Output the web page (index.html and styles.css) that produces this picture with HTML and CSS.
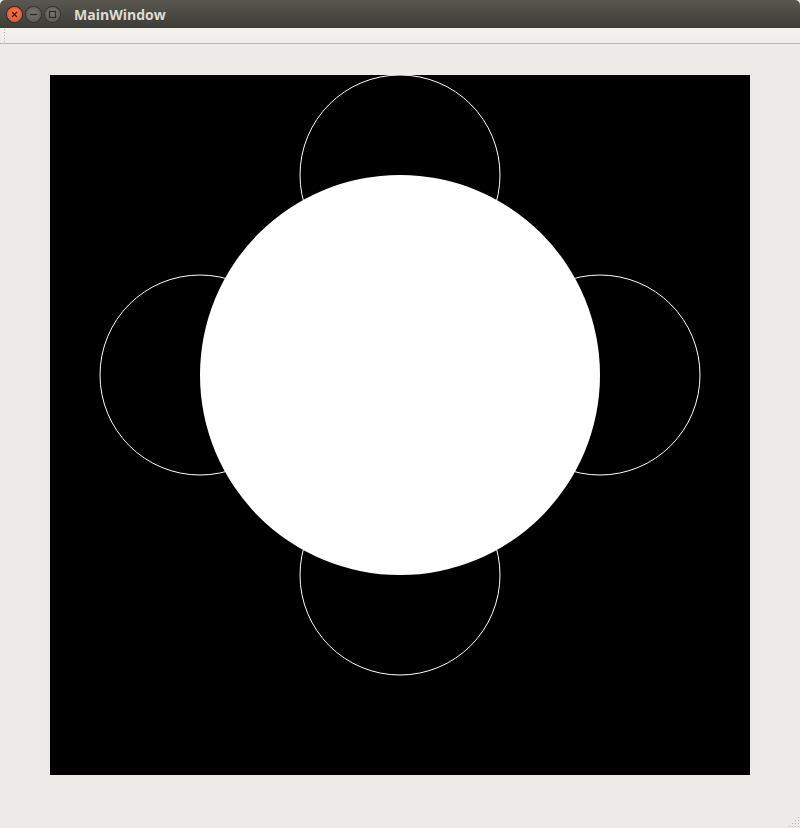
FILE: index.html
```html
<!DOCTYPE html>
<html>
<head>
<meta charset="utf-8">
<link rel="stylesheet" href="styles.css">
</head>
<body>
<div class="window">
  <div class="titlebar">
    <div class="controls">
      <span class="btn close">
        <svg width="15" height="15" viewBox="0 0 15 15"><path d="M5 5 L10 10 M10 5 L5 10" stroke="#3a1a10" stroke-width="1.2"/></svg>
      </span>
      <span class="btn">
        <svg width="15" height="15" viewBox="0 0 15 15"><path d="M4 7.5 H11" stroke="#2e2d2a" stroke-width="1.4"/></svg>
      </span>
      <span class="btn">
        <svg width="15" height="15" viewBox="0 0 15 15"><rect x="4.5" y="4.5" width="6" height="6" fill="none" stroke="#2e2d2a" stroke-width="1.2"/></svg>
      </span>
    </div>
    <span class="title">MainWindow</span>
  </div>
  <div class="toolbar"><span class="handle"></span></div>
  <div class="content">
    <div class="canvas">
      <svg width="700" height="700" viewBox="0 0 700 700">
        <circle cx="350" cy="100" r="100" fill="none" stroke="#fff" stroke-width="1"/>
        <circle cx="150" cy="300" r="100" fill="none" stroke="#fff" stroke-width="1"/>
        <circle cx="550" cy="300" r="100" fill="none" stroke="#fff" stroke-width="1"/>
        <circle cx="350" cy="500" r="100" fill="none" stroke="#fff" stroke-width="1"/>
        <circle cx="350" cy="300" r="200" fill="#fff"/>
      </svg>
    </div>
  </div>
  <span class="grip"></span>
</div>
</body>
</html>
```
FILE: styles.css
```css
html, body {
  margin: 0;
  padding: 0;
  background: #edebe7;
}
.window {
  width: 800px;
  height: 828px;
  display: flex;
  flex-direction: column;
  position: relative;
  overflow: hidden;
}
.titlebar {
  height: 28px;
  background: linear-gradient(#5a5750, #3d3c37);
  border-radius: 5px 5px 0 0;
  display: flex;
  align-items: center;
  box-sizing: border-box;
}
.controls {
  display: flex;
  gap: 4px;
  padding-left: 7px;
}
.btn {
  width: 15px;
  height: 15px;
  border-radius: 50%;
  background: radial-gradient(circle at 50% 40%, #7a7770, #55534e);
  box-shadow: 0 0 0 1px #33322e;
  display: flex;
}
.btn.close {
  background: radial-gradient(circle at 50% 40%, #f47a4e, #e0501f);
  box-shadow: 0 0 0 1px #3a2a22;
}
.title {
  margin-left: 14px;
  font-family: "Open Sans", "DejaVu Sans", sans-serif;
  font-weight: bold;
  font-size: 14px;
  color: #dfdbd2;
}
.toolbar {
  height: 15px;
  background: linear-gradient(#f3f1ee, #efedea);
  border-bottom: 1px solid #b9b6b0;
  padding-left: 3px;
  display: flex;
  align-items: flex-start;
}
.handle {
  width: 4px;
  height: 15px;
  background-image: radial-gradient(circle, #b5b2ac 0.8px, transparent 0.9px);
  background-size: 3px 3px;
}
.content {
  flex: 1;
  padding: 31px 50px 0 50px;
}
.canvas {
  width: 700px;
  height: 700px;
  background: #000;
}
.canvas svg {
  display: block;
}
.grip {
  position: absolute;
  right: 1px;
  bottom: 1px;
  width: 11px;
  height: 11px;
  background-image: radial-gradient(circle, #b8b5af 0.8px, transparent 0.9px);
  background-size: 3px 3px;
  clip-path: polygon(100% 0, 100% 100%, 0 100%);
}
```
